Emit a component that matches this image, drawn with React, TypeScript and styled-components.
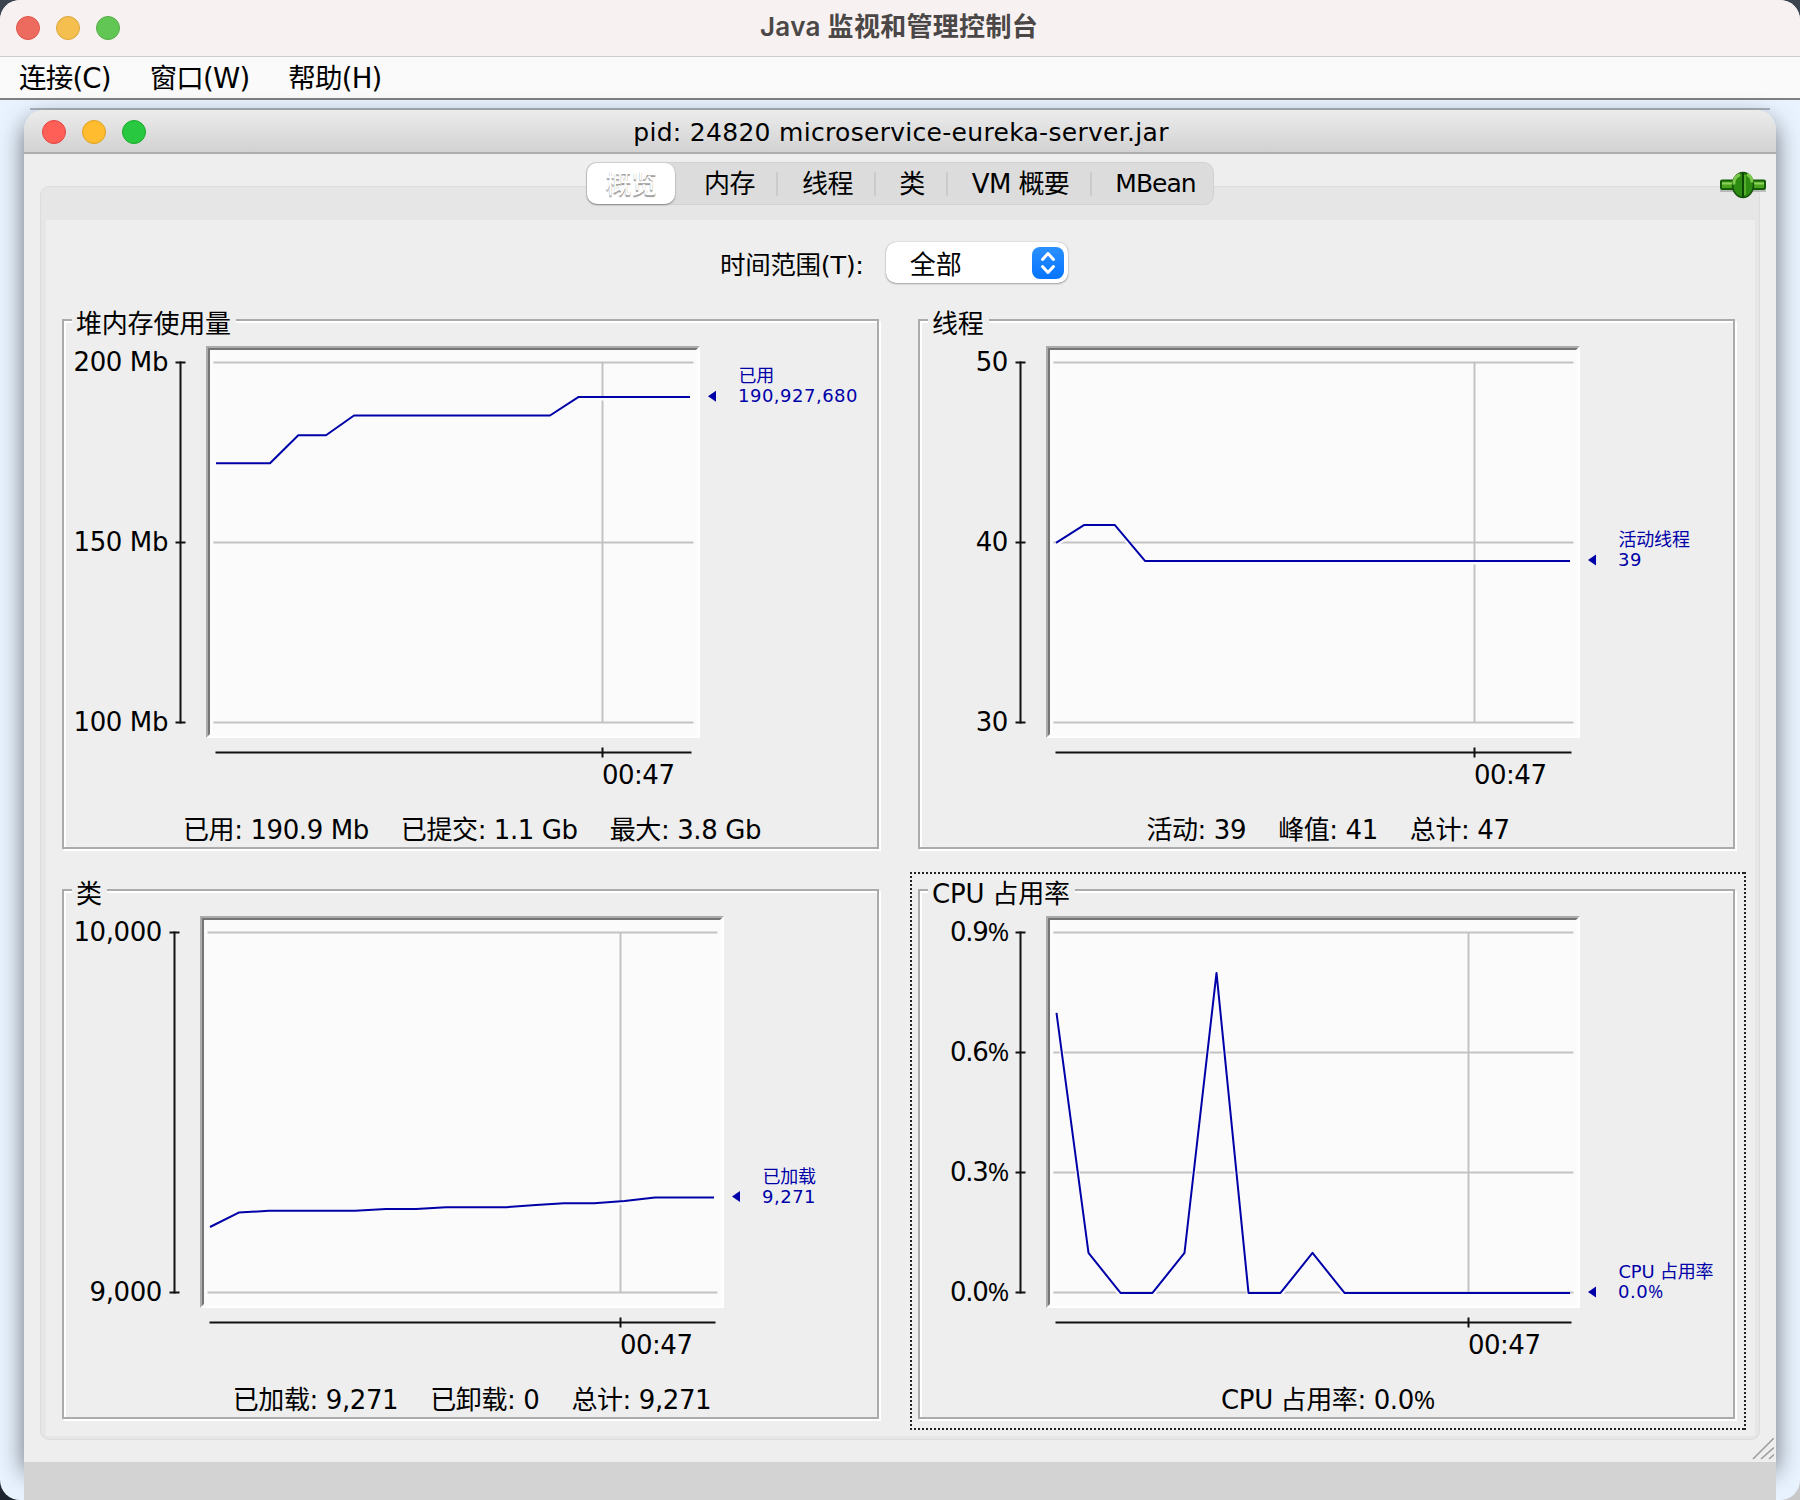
import React from 'react'
import styled, {createGlobalStyle} from 'styled-components'

const GlobalStyle = createGlobalStyle`
  * { box-sizing: border-box; margin: 0; padding: 0; }

  body {
    background:
      linear-gradient(#c8c8c8, #c8c8c8) 100% 1470px / 60px 30px no-repeat,
      linear-gradient(#3c4450 50%, #1f2530 50%);
    font-family: "DejaVu Sans", "Noto Sans CJK SC", sans-serif;
    font-size: 26px;
    color: #000;
  }
`

const AppWindow = styled.div`
  width: 1800px;
  height: 1500px;
  display: flex;
  flex-direction: column;
  border-radius: 20px;
  overflow: hidden;
  background-color: #e8f3ff;
`

const TitleBar = styled.header`
  flex: none;
  height: 57px;
  display: grid;
  grid-template-columns: 160px 1fr 160px;
  align-items: center;
  padding-left: 16px;
  padding-right: 18px;
  background-color: #f7f1f1;
  border-bottom: 1px solid #d0cccc;

  > h1 {
    font-family: Inter, "Noto Sans CJK SC", sans-serif;
    font-size: 26px;
    font-weight: 600;
    line-height: 52px;
    letter-spacing: 0.3px;
    margin-bottom: 2px;
    text-align: center;
    color: #4b4747;
  }
`

const Lights = styled.div<{$lift?: number}>`
  display: flex;
  gap: 16px;
  margin-bottom: ${p => p.$lift || 0}px;
`

const Light = styled.i<{$color: string; $edge: string}>`
  width: 24px;
  height: 24px;
  border-radius: 50%;
  background-color: ${p => p.$color};
  border: 1px solid ${p => p.$edge};
`

const MenuBar = styled.nav`
  flex: none;
  height: 43px;
  display: flex;
  gap: 39px;
  padding-left: 19px;
  background-color: #fafafa;
  border-bottom: 2px solid #808080;

  > span {
    font-size: 27.5px;
    line-height: 43px;
    letter-spacing: -0.8px;
  }
`

const Desktop = styled.main`
  flex: 1;
  padding: 8px 24px 0;
  display: flex;
  flex-direction: column;
`

const FrameTopLine = styled.div`
  flex: none;
  height: 2px;
  margin: 0 6px;
  background-color: #abb2ba;
`

const Frame = styled.section`
  flex: none;
  height: 1352px;
  display: flex;
  flex-direction: column;
  position: relative;
  background-color: #eee;
  border-radius: 20px 20px 0 0;
  box-shadow: 0 10px 24px rgba(0, 0, 0, 0.55);
`

const FrameBar = styled.header`
  flex: none;
  height: 44px;
  display: grid;
  grid-template-columns: 160px 1fr 160px;
  align-items: center;
  padding: 0 16px 0 18px;
  border-radius: 20px 20px 0 0;
  background: linear-gradient(#ececec, #d2d2d2);
  border-bottom: 2px solid #adadad;

  > h2 {
    font-size: 25px;
    font-weight: normal;
    line-height: 46px;
    letter-spacing: 0.3px;
    text-align: center;
    white-space: nowrap;
  }
`

const TaskStrip = styled.footer`
  flex: 1;
  background-color: #d3d3d3;
  position: relative;
`

const Tabs = styled.ul`
  align-self: center;
  flex: none;
  height: 43px;
  margin: 8px 0 -19px 0;
  display: flex;
  align-items: center;
  list-style: none;
  border-radius: 10px;
  background-color: #dcdcdc;
  border: 1px solid #d2d2d2;
  position: relative;
  z-index: 1;
`

const Tab = styled.li<{$width: number; $indent?: number; $selected?: boolean; $divider?: boolean}>`
  width: ${p => p.$width}px;
  height: ${p => p.$selected ? 41 : 24}px;
  padding-left: ${p => p.$indent || 0}px;
  display: flex;
  align-items: center;
  justify-content: center;
  white-space: nowrap;
  line-height: 24px;
  letter-spacing: -0.6px;
  border-right: ${p => p.$divider ? '2px solid #cbcbcb' : 'none'};

  ${p => p.$selected && `
    color: #fff;
    background-color: #fff;
    border-radius: 10px;
    box-shadow: 0 1px 2px rgba(0, 0, 0, 0.4);
    text-shadow: 0 1.5px 1px rgba(0, 0, 0, 0.42);
  `}

  &:last-child {
    font-size: 25px;
    letter-spacing: -1px;
  }
`

const ConnectionIcon = styled.svg`
  position: absolute;
  right: 10px;
  top: 61px;
  z-index: 1;
`

const ResizeGrip = styled.svg`
  position: absolute;
  right: 2px;
  bottom: 2px;
`

const TabPane = styled.div`
  flex: none;
  width: 1720px;
  height: 1254px;
  margin-left: 16px;
  padding: 33px 4px 3px 5px;
  background-color: #e6e6e6;
  border: 1px solid #dcdcdc;
  border-radius: 9px;
`

const Overview = styled.div`
  height: 100%;
  background-color: #eee;
  display: flex;
  flex-direction: column;
`

const RangeRow = styled.div`
  height: 99px;
  flex: none;
  display: flex;
  align-items: flex-start;
  padding: 22px 0 0 674px;
  gap: 22px;

  > label {
    font-size: 25.5px;
    line-height: 46px;
    letter-spacing: -0.3px;
  }
`

const Combo = styled.div`
  width: 182px;
  height: 41px;
  display: flex;
  align-items: center;
  justify-content: space-between;
  padding: 0 4px 0 24px;
  background-color: #fff;
  border-radius: 10px;
  box-shadow: 0 0 1px rgba(0, 0, 0, 0.4), 0 1px 2px rgba(0, 0, 0, 0.3);
`

const Grid = styled.div`
  display: grid;
  grid-template-columns: 817px 817px;
  grid-auto-rows: 530px;
  gap: 40px 39px;
  padding-left: 16px;
`

// etched group box, the title sits on the top border
const Panel = styled.section<{$focused?: boolean}>`
  display: flex;
  flex-direction: column;
  align-items: flex-start;
  position: relative;
  border: 2px solid #ababab;
  box-shadow: 2px 2px #fff, inset 2px 2px #fff;

  > h3 {
    height: 29px;
    margin: -13px 0 0 8px;
    padding: 0 5px 0 4px;
    background-color: #eee;
    font-size: 26px;
    font-weight: normal;
    line-height: 32px;
    letter-spacing: -0.2px;
    position: relative;
  }

  &::after {
    content: '';
    display: ${p => p.$focused ? 'block' : 'none'};
    position: absolute;
    inset: -19px -13px -13px -10px;
    --dots-x: repeating-linear-gradient(90deg, #222 0 2px, transparent 2px 4px);
    --dots-y: repeating-linear-gradient(#222 0 2px, transparent 2px 4px);
    background:
      var(--dots-x) top / 100% 2px no-repeat,
      var(--dots-x) bottom / 100% 2px no-repeat,
      var(--dots-y) left / 2px 100% no-repeat,
      var(--dots-y) right / 2px 100% no-repeat;
  }
`

const Plot = styled.svg`
  display: block;
  flex: none;
  overflow: visible;
  font-size: 26px;

  .axis { stroke: #111; stroke-width: 2; }
  .grid { stroke: #c3c3c3; stroke-width: 2; }
  .series { fill: none; stroke: #0000a8; stroke-width: 2; stroke-linejoin: round; }
  .halo { fill: none; stroke: #fbfbfb; stroke-width: 4; }
  .value { fill: #0000a8; font-size: 18px; }
  .percent { font-family: "Open Sans", sans-serif; }
`

const Stats = styled.div`
  width: 100%;
  margin-top: 14px;
  padding-left: 3px;
  display: flex;
  justify-content: center;
  gap: 32px;
  line-height: 38px;
  letter-spacing: -0.4px;
`

const Percent = styled.span`
  font-family: "Open Sans", sans-serif;
  line-height: 1;
`

type ChartProps = {
  left: number
  right: number
  ticks: string[]
  min: number
  max: number
  timeX: number
  name: string
  value: string
  points: [number, number][]
}

const TOP = 25.5
const HEIGHT = 360

// the percent sign comes from a narrower face than the digits
const svgNumber = (text: string) => text.endsWith('%')
  ? <>{text.slice(0, -1)}<tspan className="percent">%</tspan></>
  : text

const Chart = ({left, right, ticks, min, max, timeX, name, value, points}: ChartProps) => {
  const toY = (v: number) => TOP + (max - v) / (max - min) * HEIGHT
  const line = points.map(([x, v]) => `${left + x},${(toY(v) + 0.4).toFixed(1)}`).join(' ')
  const lastY = toY(points[points.length - 1][1])
  const axisX = left - 25.5

  return (
    <Plot width={813} height={460}>
      <rect x={left} y={9} width={right - left} height={392} fill="#fff"/>
      <path d={`M${left} 401V9H${right}l-2 2H${left + 2}V399z`} fill="#ababab"/>
      <path d={`M${left + 2} 399V11H${right - 2}l-2 2H${left + 4}V397z`} fill="#757575"/>
      <rect x={left + 4} y={13} width={right - left - 7} height={386} fill="#fbfbfb"/>
      <line className="axis" x1={axisX} x2={axisX} y1={TOP - 1} y2={TOP + HEIGHT + 1}/>
      {ticks.map((tick, i) => {
        const y = TOP + i * HEIGHT / (ticks.length - 1)
        return (
          <g key={tick}>
            <line className="grid" x1={left + 7.5} x2={right - 6.5} y1={y} y2={y}/>
            <line className="axis" x1={axisX - 5} x2={axisX + 5} y1={y} y2={y}/>
            <text x={left - 38} y={y + 8} textAnchor="end" letterSpacing={tick.endsWith('%') ? -1.2 : -0.4}>
              {svgNumber(tick)}
            </text>
          </g>
        )
      })}
      <line className="grid" x1={timeX} x2={timeX} y1={TOP} y2={TOP + HEIGHT}/>
      <polyline className="halo" points={line} transform="translate(0 1.5)"/>
      <polyline className="series" points={line}/>
      <line className="axis" x1={left + 9.5} x2={right - 8.5} y1={415.4} y2={415.4}/>
      <line className="axis" x1={timeX} x2={timeX} y1={410.5} y2={420.5}/>
      <text x={timeX - 0.5} y={447} letterSpacing="-0.5">00:47</text>
      <path d={`M${right + 8} ${lastY - 0.5}l8 -5.5v11z`} fill="#0000a8"/>
      <text className="value" x={right + 38.5} y={lastY - 14.5} letterSpacing="-0.2">{name}</text>
      <text className="value" x={right + 38} y={lastY + 5.5} letterSpacing="0.5">{svgNumber(value)}</text>
    </Plot>
  )
}

const panels = [
  {
    title: '堆内存使用量',
    stats: ['已用: 190.9 Mb', '已提交: 1.1 Gb', '最大: 3.8 Gb'],
    chart: {
      left: 142, right: 636, ticks: ['200 Mb', '150 Mb', '100 Mb'], min: 100, max: 200, timeX: 538.5,
      name: '已用', value: '190,927,680',
      points: [[10, 172.1], [64, 172.1], [92.3, 179.9], [120, 179.9], [148, 185.4], [344, 185.4], [372.3, 190.5], [484, 190.5]]
    }
  },
  {
    title: '线程',
    stats: ['活动: 39', '峰值: 41', '总计: 47'],
    chart: {
      left: 126, right: 660, ticks: ['50', '40', '30'], min: 30, max: 50, timeX: 554.5,
      name: '活动线程', value: '39',
      points: [[10, 40], [38.3, 41], [68.7, 41], [99, 39], [524, 39]]
    }
  },
  {
    title: '类',
    stats: ['已加载: 9,271', '已卸载: 0', '总计: 9,271'],
    chart: {
      left: 136, right: 660, ticks: ['10,000', '9,000'], min: 9000, max: 10000, timeX: 556.5,
      name: '已加载', value: '9,271',
      points: [[10, 183], [38.7, 223], [69, 228], [155, 228], [186, 233], [216, 233], [246, 238], [306, 238],
        [336, 244], [364, 249], [394, 249], [424.5, 255], [455, 265], [514, 265]].map(([x, v]) => [x, 9000 + v])
    }
  },
  {
    title: 'CPU 占用率',
    stats: ['CPU 占用率: 0.0%'],
    focused: true,
    chart: {
      left: 126, right: 660, ticks: ['0.9%', '0.6%', '0.3%', '0.0%'], min: 0, max: 0.9, timeX: 548.5,
      name: 'CPU 占用率', value: '0.0%',
      points: [[10.5, 0.7], [42.5, 0.1], [74.5, 0], [106.5, 0], [138.5, 0.1], [170.5, 0.8], [202.5, 0], [234.5, 0],
        [266.5, 0.1], [298.5, 0], [524, 0]]
    }
  }
] as {title: string; stats: string[]; focused?: boolean; chart: ChartProps}[]

export default function App() {
  return (
    <>
      <GlobalStyle/>
      <AppWindow>
        <TitleBar>
          <Lights>
            <Light $color="#ed6a5f" $edge="#e0564b"/>
            <Light $color="#f5bf4f" $edge="#dba53c"/>
            <Light $color="#62c655" $edge="#53ad46"/>
          </Lights>
          <h1>Java 监视和管理控制台</h1>
        </TitleBar>
        <MenuBar>
          <span>连接(C)</span>
          <span>窗口(W)</span>
          <span>帮助(H)</span>
        </MenuBar>
        <Desktop>
          <FrameTopLine/>
          <Frame>
            <FrameBar>
              <Lights $lift={3}>
                <Light $color="#ff5f57" $edge="#e2463f"/>
                <Light $color="#febc2e" $edge="#e0a01f"/>
                <Light $color="#28c840" $edge="#1aab29"/>
              </Lights>
              <h2>pid: 24820 microservice-eureka-server.jar</h2>
            </FrameBar>
            <ConnectionIcon width="48" height="28" viewBox="0 0 48 28">
              <rect x="3" y="9.5" width="44" height="8.5" rx="1" fill="#4aa51c" stroke="#145c08" strokeWidth="2"/>
              <path d="M4 12.5h42" stroke="#8fd45f" strokeWidth="2"/>
              <path d="M2 20h46" stroke="#000" strokeOpacity="0.2" strokeWidth="2"/>
              <ellipse cx="25" cy="14" rx="10.5" ry="12.5" fill="#2f8c12" stroke="#14510a" strokeWidth="1.5"/>
              <path d="M22 3.5c-5 2-6.5 6-6 10M29 3.5c3 1 5 4 5 8" fill="none" stroke="#7cc94e" strokeWidth="3"/>
              <path d="M25 2v24" stroke="#0c4705" strokeWidth="2"/>
              <path d="M27 4v20" stroke="#62b837" strokeWidth="1.5"/>
            </ConnectionIcon>
            <Tabs>
              <Tab $width={88} $selected>概览</Tab>
              <Tab $width={103} $indent={8} $divider>内存</Tab>
              <Tab $width={98} $indent={3} $divider>线程</Tab>
              <Tab $width={72} $indent={2} $divider>类</Tab>
              <Tab $width={144} $indent={3} $divider>VM 概要</Tab>
              <Tab $width={121} $indent={6}>MBean</Tab>
            </Tabs>
            <TabPane>
              <Overview>
                <RangeRow>
                  <label>时间范围(T):</label>
                  <Combo>
                    全部
                    <svg width="32" height="32" viewBox="0 0 32 32">
                      <defs>
                        <linearGradient id="knob" x1="0" y1="0" x2="0" y2="1">
                          <stop offset="0" stopColor="#2b90ff"/>
                          <stop offset="1" stopColor="#0574ff"/>
                        </linearGradient>
                      </defs>
                      <rect width="32" height="32" rx="8" fill="url(#knob)"/>
                      <path d="M10.5 12.5l5.5-6 5.5 6M10.5 19.5l5.5 6 5.5-6" fill="none" stroke="#fff"
                            strokeWidth="3" strokeLinecap="round" strokeLinejoin="round"/>
                    </svg>
                  </Combo>
                </RangeRow>
                <Grid>
                  {panels.map(panel => (
                    <Panel key={panel.title} $focused={panel.focused}>
                      <h3>{panel.title}</h3>
                      <Chart {...panel.chart}/>
                      <Stats>
                        {panel.stats.map(stat => (
                          <span key={stat}>
                            {stat.replace('%', '')}
                            {stat.endsWith('%') && <Percent>%</Percent>}
                          </span>
                        ))}
                      </Stats>
                    </Panel>
                  ))}
                </Grid>
              </Overview>
            </TabPane>
            <ResizeGrip width="22" height="22" viewBox="0 0 22 22">
              <path d="M1 21L22 0M9 21L22 9.5M17 21l5-4.5" stroke="#9a9a9a" strokeWidth="1.5"/>
            </ResizeGrip>
          </Frame>
          <TaskStrip/>
        </Desktop>
      </AppWindow>
    </>
  )
}
